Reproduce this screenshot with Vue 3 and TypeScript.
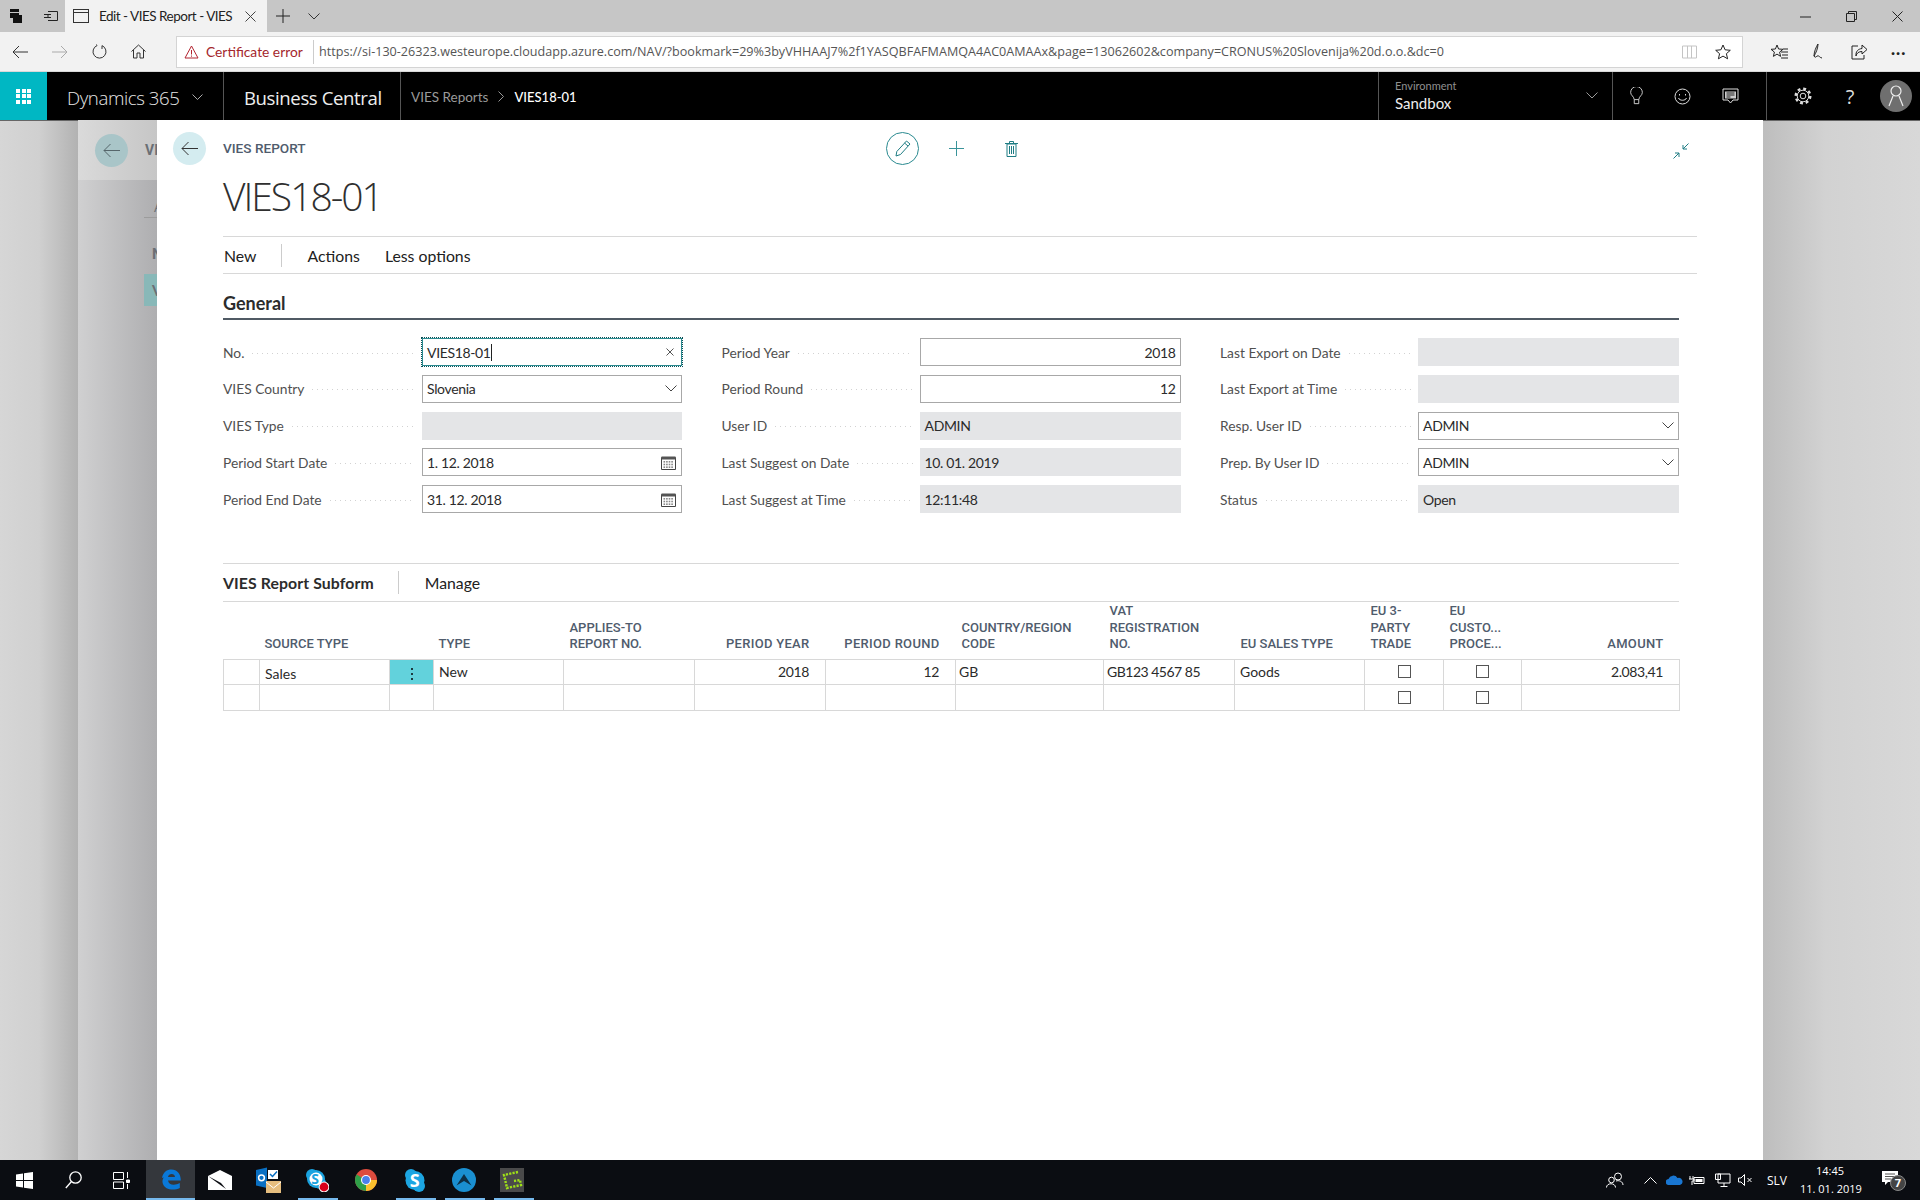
<script setup lang="ts">
interface Field {
  label: string
  value?: string
  kind: 'text' | 'focus' | 'select' | 'date' | 'number' | 'readonly'
}

const fieldColumns: Field[][] = [
  [
    { label: 'No.', value: 'VIES18-01', kind: 'focus' },
    { label: 'VIES Country', value: 'Slovenia', kind: 'select' },
    { label: 'VIES Type', kind: 'readonly' },
    { label: 'Period Start Date', value: '1. 12. 2018', kind: 'date' },
    { label: 'Period End Date', value: '31. 12. 2018', kind: 'date' },
  ],
  [
    { label: 'Period Year', value: '2018', kind: 'number' },
    { label: 'Period Round', value: '12', kind: 'number' },
    { label: 'User ID', value: 'ADMIN', kind: 'readonly' },
    { label: 'Last Suggest on Date', value: '10. 01. 2019', kind: 'readonly' },
    { label: 'Last Suggest at Time', value: '12:11:48', kind: 'readonly' },
  ],
  [
    { label: 'Last Export on Date', kind: 'readonly' },
    { label: 'Last Export at Time', kind: 'readonly' },
    { label: 'Resp. User ID', value: 'ADMIN', kind: 'select' },
    { label: 'Prep. By User ID', value: 'ADMIN', kind: 'select' },
    { label: 'Status', value: 'Open', kind: 'readonly' },
  ],
]

const colWidths = [36, 130, 44, 130, 131, 131, 130, 148, 131, 130, 79, 78, 158]

const calendarDays = [0, 1, 2, 3, 4, 5, 6, 7, 8, 9, 10, 11]
const activeApps = [6, 8, 9, 10]
</script>

<template>
  <div class="screen">
    <!-- browser tabs -->
    <div class="titlebar">
      <svg class="tb-icon" width="16" height="16" viewBox="0 0 16 16"><path d="M2 1h9v3H2z" fill="#111" /><path d="M2 5h9v2h3v8H5v-5H2z" fill="#111" /></svg>
      <svg class="tb-icon tb-second" width="16" height="16" viewBox="0 0 16 16" fill="none" stroke="#222"><path d="M5 3.5h9.5v9H5M1 6.5h7M1 9.5h7M5 6.5v3" /></svg>
      <div class="tab">
        <svg width="16" height="14" viewBox="0 0 16 14" fill="none" stroke="#333"><rect x=".5" y=".5" width="15" height="13" /><path d="M.5 3.5h15" /></svg>
        <span class="tab-title">Edit - VIES Report - VIES</span>
        <svg class="tab-close" width="11" height="11" viewBox="0 0 11 11" stroke="#444"><path d="M.5.5l10 10M10.5.5l-10 10" /></svg>
      </div>
      <svg class="tab-plus" width="14" height="14" viewBox="0 0 14 14" stroke="#222"><path d="M7 0v14M0 7h14" /></svg>
      <svg class="tab-more" width="12" height="7" viewBox="0 0 12 7" fill="none" stroke="#333"><path d="M.5.5L6 6 11.5.5" /></svg>
      <div class="win-controls">
        <svg width="11" height="11" viewBox="0 0 11 11" stroke="#222"><path d="M0 6h11" /></svg>
        <svg width="11" height="11" viewBox="0 0 11 11" fill="none" stroke="#222"><path d="M.5 2.5h8v8h-8zM2.5 2.5v-2h8v8h-2" /></svg>
        <svg width="11" height="11" viewBox="0 0 11 11" stroke="#222"><path d="M.5.5l10 10M10.5.5l-10 10" /></svg>
      </div>
    </div>

    <!-- address bar -->
    <div class="toolbar">
      <div class="nav-btns">
        <svg width="16" height="14" viewBox="0 0 16 14" fill="none" stroke="#333"><path d="M16 7H1M7 1L1 7l6 6" /></svg>
        <svg width="16" height="14" viewBox="0 0 16 14" fill="none" stroke="#aaa"><path d="M0 7h15M9 1l6 6-6 6" /></svg>
        <svg width="15" height="15" viewBox="0 0 15 15" fill="none" stroke="#333"><path d="M5 1.6A6.5 6.5 0 1 0 10 1.6M10 1.6V5M5 1.6L4.5 .5" /></svg>
        <svg width="15" height="15" viewBox="0 0 15 15" fill="none" stroke="#333"><path d="M.5 7.5L7.5 1l7 6.5M2.5 6v8h3.5V9h3v5h3.5V6" /></svg>
      </div>
      <div class="address">
        <svg width="15" height="14" viewBox="0 0 15 14" fill="none" stroke="#b32430"><path d="M7.5 1L14 13H1zM7.5 5v4.5M7.5 10.5v1.2" /></svg>
        <span class="cert">Certificate error</span>
        <span class="url">https://si-130-26323.westeurope.cloudapp.azure.com/NAV/?bookmark=29%3byVHHAAJ7%2f1YASQBFAFMAMQA4AC0AMAAx&amp;page=13062602&amp;company=CRONUS%20Slovenija%20d.o.o.&amp;dc=0</span>
        <svg class="read-icon" width="15" height="14" viewBox="0 0 15 14" fill="none" stroke="#c4c4c4"><path d="M.5 1h14v12H.5zM5.5 1v12M9.5 1v12" /></svg>
        <svg class="star-icon" width="16" height="16" viewBox="0 0 16 16" fill="none" stroke="#222"><path d="M8 1l2.1 4.8 5.2.5-3.9 3.4 1.2 5.1L8 12.1l-4.6 2.7 1.2-5.1L.7 6.3l5.2-.5z" /></svg>
      </div>
      <div class="tool-btns">
        <svg width="17" height="16" viewBox="0 0 17 16" fill="none" stroke="#222"><path d="M6 1L7.6 5l4.4.3-3.4 2.8 1 4.3L6 10.100 2.400 12.400l1-4.300L0 5.300 4.400 5zM10 8h7M11 11h6M10 14h7M12 5h5" /></svg>
        <svg width="17" height="17" viewBox="0 0 17 17" fill="none" stroke="#222"><path d="M7 1C5 4 3 9 3 13c2-3 4-8 4-12zM3 13c1 2 2 1 3 0 2-1 3 2 5 2" /></svg>
        <svg width="17" height="16" viewBox="0 0 17 16" fill="none" stroke="#222"><path d="M7 2H1v13h12v-4M11 1l5 4.500-5 4.500V7.500C8 7.500 5.500 9 5 12c-.5-4.500 2-7 6-7.500z" /></svg>
        <span class="more-dots">···</span>
      </div>
    </div>

    <!-- product header -->
    <header class="appbar">
      <div class="waffle">
        <span v-for="n in 9" :key="n"></span>
      </div>
      <div class="brand">
        <span>Dynamics 365</span>
        <svg width="11" height="6" viewBox="0 0 11 6" fill="none" stroke="#aaa"><path d="M.5.5l5 5 5-5" /></svg>
      </div>
      <div class="product">Business Central</div>
      <div class="crumbs">
        <span class="crumb-link">VIES Reports</span>
        <svg width="6" height="11" viewBox="0 0 6 11" fill="none" stroke="#999"><path d="M.5.5l5 5-5 5" /></svg>
        <span class="crumb-now">VIES18-01</span>
      </div>
      <div class="env">
        <div class="env-text">
          <div class="env-label">Environment</div>
          <div class="env-name">Sandbox</div>
        </div>
        <svg width="12" height="7" viewBox="0 0 12 7" fill="none" stroke="#999"><path d="M.5.5L6 6 11.500.5" /></svg>
      </div>
      <div class="bar-icons">
        <svg width="13" height="18" viewBox="0 0 14 20" fill="none" stroke="#ddd"><path d="M4.500 14C4 10 .5 9.500.5 6a6.500 6.500 0 0 1 13 0c0 3.500-3.500 4-4 8zM4.500 14v4.500h5V14" /></svg>
        <svg width="17" height="17" viewBox="0 0 17 17" fill="none" stroke="#ddd"><circle cx="8.500" cy="8.500" r="7.500" /><path d="M4.500 10c1 3 7 3 8 0M5.500 6v1.500M11.500 6v1.500" /></svg>
        <svg width="17" height="17" viewBox="0 0 17 17"><path d="M1 1h15v11h-5l-2.500 3L6 12H1z" fill="none" stroke="#ddd" /><path d="M3 3.500h11v7H3z" fill="#ccc" /><path d="M4.500 5h8M4.500 7h8M4.500 9h4" stroke="#222" /></svg>
      </div>
      <div class="bar-icons bar-icons-last">
        <svg class="gear" width="18" height="18" viewBox="0 0 18 18" fill="none" stroke="#ddd"><circle cx="9" cy="9" r="2.800" /><circle cx="9" cy="9" r="5.800" /><circle cx="9" cy="9" r="7.300" stroke-width="2.400" stroke-dasharray="2.900 2.830" /></svg>
        <span class="help">?</span>
        <div class="avatar">
          <svg width="16" height="22" viewBox="0 0 16 22" fill="none" stroke="#eee" stroke-width="1.200"><circle cx="8" cy="6" r="5" /><path d="M5 11L1 21M11 11l4 10" /></svg>
        </div>
      </div>
    </header>

    <main class="stage">
      <div class="gutter"></div>
      <div class="back-page">
        <div class="back-head">
          <div class="round-back dim">
            <svg width="17" height="15" viewBox="0 0 17 15" fill="none" stroke="#56666b"><path d="M17 7.500H1M7.500 1L1 7.500 7.500 14" /></svg>
          </div>
          <span class="back-cap">VI</span>
        </div>
        <div class="back-body">
          <div class="back-a">A</div>
          <div class="back-line"></div>
          <div class="back-n">N</div>
          <div class="back-row">V</div>
        </div>
      </div>

      <section class="dialog">
        <div class="top-row">
          <div class="round-back">
            <svg width="17" height="15" viewBox="0 0 17 15" fill="none" stroke="#333"><path d="M17 7.500H1M7.500 1L1 7.500 7.500 14" /></svg>
          </div>
          <span class="caption">VIES REPORT</span>
          <div class="page-actions">
            <div class="edit-btn">
              <svg width="16" height="17" viewBox="0 0 16 17" fill="none" stroke="#1f7d84"><path d="M11.500 1l3.500 3-9.500 10.500L1 16l.8-4.500zM9.500 3l3.500 3" /></svg>
            </div>
            <svg width="15" height="15" viewBox="0 0 15 15" stroke="#3a949a"><path d="M7.500 0v15M0 7.500h15" /></svg>
            <svg class="trash" width="13" height="16" viewBox="0 0 13 16" fill="none" stroke="#1f7d84"><path d="M2 3h9v12.500H2zM0 2.500h13M4.500 2.500V.5h4v2M4.500 5v8M6.500 5v8M8.500 5v8" /></svg>
          </div>
          <svg class="collapse" width="16" height="16" viewBox="0 0 16 16" fill="none" stroke="#1f7d84"><path d="M15.500.5L10 6M10 2v4h4M.5 15.500L6 10M2 10h4v4" /></svg>
        </div>

        <h1 class="page-title">VIES18-01</h1>

        <nav class="commands">
          <span>New</span>
          <i class="cmd-sep"></i>
          <span class="cmd-gap">Actions</span>
          <span>Less options</span>
        </nav>

        <div class="content">
          <h2 class="group-head">General</h2>
          <div class="form-grid">
            <div v-for="(column, c) in fieldColumns" :key="c" class="form-col">
              <div v-for="field in column" :key="field.label" class="field">
                <label class="field-label">
                  <span>{{ field.label }}</span>
                  <i class="leader"></i>
                </label>
                <div class="box" :class="field.kind">
                  <span class="box-value">{{ field.value }}</span>
                  <i v-if="field.kind === 'focus'" class="caret"></i>
                  <svg v-if="field.kind === 'focus'" class="box-x" width="8" height="8" viewBox="0 0 8 8" stroke="#555"><path d="M.5.5l7 7M7.500.5l-7 7" /></svg>
                  <svg v-if="field.kind === 'select'" class="box-chev" width="12" height="7" viewBox="0 0 12 7" fill="none" stroke="#444"><path d="M.5.5L6 6 11.500.5" /></svg>
                  <svg v-if="field.kind === 'date'" class="box-cal" width="15" height="15" viewBox="0 0 15 15">
                    <path d="M.5 2.500h14v12H.5z" fill="#fff" stroke="#444" />
                    <path d="M.5 1.500h14v3H.5z" fill="#555" />
                    <rect v-for="d in calendarDays" :key="d" :x="2.500 + (d % 4) * 2.600" :y="6 + Math.floor(d / 4) * 2.700" width="1.600" height="1.600" fill="#888" />
                  </svg>
                </div>
              </div>
            </div>
          </div>

          <div class="subform-head">
            <span class="subform-name">VIES Report Subform</span>
            <i class="cmd-sep"></i>
            <span class="cmd-gap">Manage</span>
          </div>

          <table class="lines">
            <colgroup>
              <col v-for="(w, i) in colWidths" :key="i" :style="{ width: w + 'px' }" />
            </colgroup>
            <thead>
              <tr>
                <th></th>
                <th class="tight">SOURCE TYPE</th>
                <th></th>
                <th class="tight">TYPE</th>
                <th>APPLIES-TO<br />REPORT NO.</th>
                <th class="num">PERIOD YEAR</th>
                <th class="num">PERIOD ROUND</th>
                <th>COUNTRY/REGION<br />CODE</th>
                <th>VAT<br />REGISTRATION<br />NO.</th>
                <th>EU SALES TYPE</th>
                <th>EU 3-<br />PARTY<br />TRADE</th>
                <th>EU<br />CUSTO...<br />PROCE...</th>
                <th class="num">AMOUNT</th>
              </tr>
            </thead>
            <tbody>
              <tr class="row-first">
                <td></td>
                <td class="sales">Sales</td>
                <td class="row-menu"><span class="vdots"><i></i><i></i><i></i></span></td>
                <td>New</td>
                <td></td>
                <td class="num">2018</td>
                <td class="num">12</td>
                <td class="pull">GB</td>
                <td class="pull digits">GB123 4567 85</td>
                <td>Goods</td>
                <td class="check"><i class="tick"></i></td>
                <td class="check"><i class="tick"></i></td>
                <td class="num">2.083,41</td>
              </tr>
              <tr class="row-empty">
                <td></td><td></td><td></td><td></td><td></td><td></td><td></td><td></td><td></td><td></td>
                <td class="check"><i class="tick"></i></td>
                <td class="check"><i class="tick"></i></td>
                <td></td>
              </tr>
            </tbody>
          </table>
        </div>
      </section>
      <div class="gutter-right"></div>
    </main>

    <!-- windows taskbar -->
    <footer class="taskbar">
      <div class="apps">
        <div class="app">
          <svg width="17" height="17" viewBox="0 0 17 17" fill="#fff"><path d="M0 2.500L7 1.500v6.500H0zM8 1.300L17 0v8H8zM0 9h7v6.500l-7-1zM8 9h9v8l-9-1.300z" /></svg>
        </div>
        <div class="app">
          <svg width="17" height="18" viewBox="0 0 17 18" fill="none" stroke="#fff" stroke-width="1.300"><circle cx="10.500" cy="6.500" r="5.700" /><path d="M6.500 10.500L.8 17" /></svg>
        </div>
        <div class="app">
          <svg width="18" height="17" viewBox="0 0 18 17" fill="none" stroke="#fff"><path d="M.5.500h10v7H.5zM.5 10h10v6.500H.5z" /><path d="M14.500 0v6M14.500 12v5" /><path d="M13.500 8h3v2.500h-3z" fill="#fff" /></svg>
        </div>
        <div class="app app-active">
          <svg width="20" height="21" viewBox="0 0 20 21"><path d="M1 9C2 3 6 .5 10.500.5 16 .5 19.800 4.500 19.800 11.500H7c.5 4.500 6.500 5.500 11.800 2.500v5c-6 3-15 2-17-4.500C.5 10.500 3.500 6.500 6 5 4 6.500 3.500 8 3.500 8zM7 8h7c0-4-6.500-4-7 0z" fill="#0a78d7" /></svg>
        </div>
        <div class="app">
          <svg width="24" height="20" viewBox="0 0 24 20"><path d="M0 6l12-6 12 6v14H0z" fill="#fff" /><path d="M0 6l13 7 5 6-7-5z" fill="#0b0d12" /></svg>
        </div>
        <div class="app">
          <svg width="26" height="26" viewBox="0 0 26 26">
            <path d="M1 3l11-2.500V21L1 18.500z" fill="#0a6fc2" />
            <circle cx="6.500" cy="10.800" r="2.900" fill="none" stroke="#fff" stroke-width="1.500" />
            <path d="M13 3h10v9H13z" fill="#fff" />
            <path d="M15 7l2.500 2.500L22 4.500" fill="none" stroke="#0a6fc2" stroke-width="1.500" />
            <path d="M11 14h15v12H11z" fill="#e6bd7e" />
            <path d="M11 15l7.500 6L26 15" fill="none" stroke="#fff" />
          </svg>
        </div>
        <div class="app">
          <svg width="24" height="24" viewBox="0 0 24 24">
            <circle cx="7" cy="7" r="6" fill="#1aa3e0" />
            <circle cx="15" cy="15" r="6" fill="#1aa3e0" />
            <circle cx="11" cy="11" r="9" fill="#1aa3e0" />
            <circle cx="11" cy="11" r="6.500" fill="#fff" />
            <circle cx="19" cy="19" r="5.400" fill="#fff" />
            <circle cx="19" cy="19" r="4.400" fill="#d9001b" />
          </svg>
          <span class="skype-s skype-s-small">S</span>
        </div>
        <div class="app">
          <svg width="22" height="22" viewBox="0 0 22 22">
            <circle cx="11" cy="11" r="11" fill="#dd4b3e" />
            <path d="M11 11L1.500 5.500A11 11 0 0 0 11 22z" fill="#2e9f48" />
            <path d="M11 11h11a11 11 0 0 1-11 11z" fill="#fbc02d" />
            <circle cx="11" cy="11" r="5" fill="#fff" />
            <circle cx="11" cy="11" r="3.900" fill="#4a80ec" />
          </svg>
        </div>
        <div class="app">
          <svg width="20" height="23" viewBox="0 0 20 23">
            <circle cx="6" cy="6" r="6" fill="#1ca5e2" />
            <circle cx="14" cy="17" r="6" fill="#1ca5e2" />
            <circle cx="10" cy="11.500" r="9.500" fill="#1ca5e2" />
          </svg>
          <span class="skype-s">S</span>
        </div>
        <div class="app">
          <svg width="24" height="24" viewBox="0 0 24 24">
            <circle cx="12" cy="12" r="12" fill="#1a8fd1" />
            <path d="M4.500 17.500L12 6l7.500 11.500L12 13z" fill="#0d2f46" />
          </svg>
        </div>
        <div class="app">
          <svg width="24" height="24" viewBox="0 0 24 24">
            <rect width="24" height="24" fill="#4a4a4a" />
            <path d="M18 4L4 7l3 13 14-3-1-5-6 1" fill="none" stroke="#9ee018" stroke-width="2.400" stroke-dasharray="2.200 1.200" />
          </svg>
        </div>
        <i v-for="a in activeApps" :key="a" class="app-mark" :style="{ left: a * 49 + 4 + 'px' }"></i>
      </div>

      <div class="tray">
        <svg class="tray-people" width="18" height="16" viewBox="0 0 18 16" fill="none" stroke="#fff"><circle cx="12" cy="4.500" r="3.500" /><circle cx="5.500" cy="8" r="2.800" /><path d="M.5 15.500c0-5 9-5 9 0M10 9c3-1 7 .5 7 4" /></svg>
        <svg class="tray-chev" width="13" height="7" viewBox="0 0 13 7" fill="none" stroke="#fff"><path d="M.5 6.500l6-6 6 6" /></svg>
        <svg class="tray-cloud" width="17" height="10" viewBox="0 0 17 10"><path d="M3 10a3 3 0 0 1-.5-6A5 5 0 0 1 11.500 3 3.500 3.500 0 0 1 14 10z" fill="#1976d2" /></svg>
        <svg class="tray-batt" width="16" height="11" viewBox="0 0 16 11"><path d="M5 2.500h10v6H5z" fill="none" stroke="#fff" /><path d="M6.500 4h7v3h-7z" fill="#fff" /><path d="M1 1v3M4 1v3M0 4h5v2H3v4" fill="none" stroke="#fff" /></svg>
        <svg class="tray-net" width="16" height="14" viewBox="0 0 16 14" fill="none" stroke="#fff"><path d="M3 1h12v9H3zM9 10v3.500M5.500 13.500h7M.5 1h5v5.500h-5z" /></svg>
        <svg class="tray-vol" width="15" height="12" viewBox="0 0 15 12" fill="none" stroke="#fff"><path d="M.5 4h2.500L6.500.5v11L3 8H.5zM9.500 4l4 4M13.500 4l-4 4" /></svg>
        <span class="tray-lang">SLV</span>
        <div class="tray-clock">
          <div>14:45</div>
          <div>11. 01. 2019</div>
        </div>
        <div class="tray-note">
          <svg width="17" height="16" viewBox="0 0 17 16"><path d="M0 0h16v11H6l-3 3v-3H0z" fill="#fff" /><path d="M3 3h10M3 5.500h10M3 8h6" stroke="#555" /></svg>
          <span class="note-count">7</span>
        </div>
      </div>
    </footer>
  </div>
</template>

<style>
html,
body {
  margin: 0;
  background: #fff;
}
</style>

<style scoped>
.screen {
  width: 1920px;
  height: 1200px;
  display: flex;
  flex-direction: column;
  overflow: hidden;
  font-family: Lato, "Open Sans", sans-serif;
  color: #333;
}

/* browser chrome */
.titlebar {
  height: 32px;
  flex: none;
  display: flex;
  align-items: center;
  background: #c6c6c6;
  padding-left: 8px;
}
.tb-second {
  margin-left: 19px;
  margin-right: 6px;
}
.tab {
  width: 202px;
  height: 32px;
  box-sizing: border-box;
  display: flex;
  align-items: center;
  gap: 10px;
  padding-left: 8px;
  background: #f2f2f2;
  font-size: 13.5px;
  letter-spacing: -0.5px;
  color: #222;
  flex: none;
}
.tab svg {
  flex: none;
}
.tab-title {
  width: 135px;
  white-space: nowrap;
}
.tab-close {
  margin-left: 1px;
}
.tab-plus {
  margin-left: 9px;
}
.tab-more {
  margin-left: 18px;
}
.win-controls {
  margin-left: auto;
  width: 120px;
  display: flex;
  align-items: center;
  gap: 35px;
}
.toolbar {
  height: 40px;
  flex: none;
  display: flex;
  align-items: center;
  background: #f2f2f2;
  border-bottom: 1px solid #d8d8d8;
  box-sizing: border-box;
}
.nav-btns {
  width: 176px;
  flex: none;
  display: flex;
  align-items: center;
  gap: 24px;
  padding-left: 12px;
  box-sizing: border-box;
}
.address {
  width: 1567px;
  height: 32px;
  flex: none;
  box-sizing: border-box;
  background: #fff;
  border: 1px solid #d4d4d4;
  display: flex;
  align-items: center;
  padding-left: 7px;
  font-size: 13.8px;
  white-space: nowrap;
}
.cert {
  color: #a4262c;
  margin-left: 7px;
  width: 107px;
  border-right: 1px solid #ccc;
  line-height: 24px;
  flex: none;
}
.url {
  margin-left: 5px;
  color: #555;
  flex: 1;
  font-family: "Open Sans", sans-serif;
  font-size: 12.6px;
  overflow: hidden;
}
.read-icon {
  margin-left: 20px;
  flex: none;
}
.star-icon {
  margin: 0 11px 0 18px;
  flex: none;
}
.tool-btns {
  flex: 1;
  display: flex;
  align-items: center;
  gap: 23px;
  padding-left: 28px;
}
.more-dots {
  font-size: 15px;
  color: #222;
  font-weight: 700;
  letter-spacing: 1px;
}

/* product bar */
.appbar {
  height: 48px;
  flex: none;
  display: flex;
  align-items: stretch;
  background: #000;
  color: #fff;
}
.waffle {
  width: 47px;
  flex: none;
  background: #00b7c3;
  display: grid;
  grid-template-columns: repeat(3, 4px);
  grid-auto-rows: 4px;
  gap: 1.5px;
  align-content: center;
  justify-content: center;
}
.waffle span {
  background: #fff;
}
.brand {
  width: 177px;
  flex: none;
  box-sizing: border-box;
  padding: 2px 0 0 20px;
  display: flex;
  align-items: center;
  gap: 13px;
  font-size: 18.6px;
  font-weight: 300;
  color: #e6e6e6;
  font-family: "Open Sans", sans-serif;
  letter-spacing: -0.4px;
  border-right: 1px solid #555;
}
.product {
  width: 177px;
  flex: none;
  box-sizing: border-box;
  padding: 2px 0 0 20px;
  display: flex;
  align-items: center;
  font-size: 18.6px;
  color: #eee;
  font-family: "Open Sans", sans-serif;
  letter-spacing: -0.4px;
  border-right: 1px solid #555;
}
.crumbs {
  flex: 1;
  display: flex;
  align-items: center;
  padding: 1px 0 0 10px;
  gap: 10px;
  font-size: 13.5px;
}
.crumb-link {
  color: #9a9a9a;
}
.crumb-now {
  color: #fff;
  font-weight: 500;
  font-size: 13px;
}
.env {
  width: 234px;
  flex: none;
  box-sizing: border-box;
  padding: 0 14px 2px 16px;
  border-left: 1px solid #555;
  display: flex;
  align-items: center;
  justify-content: space-between;
}
.env-label {
  font-size: 11px;
  color: #8f8f8f;
  line-height: 16px;
}
.env-name {
  font-size: 15px;
  color: #eee;
  line-height: 18px;
}
.bar-icons {
  width: 154px;
  flex: none;
  box-sizing: border-box;
  border-left: 1px solid #555;
  display: flex;
  align-items: center;
  gap: 31px;
  padding-left: 17px;
}
.bar-icons-last {
  padding: 0 8px 0 27px;
  gap: 0;
}
.help {
  width: 12px;
  margin-left: 32px;
  font-size: 20px;
  color: #ddd;
  text-align: center;
  font-family: "Open Sans", sans-serif;
}
.avatar {
  width: 32px;
  height: 32px;
  flex: none;
  margin-left: auto;
  border-radius: 50%;
  background: #6f6f6f;
  display: flex;
  align-items: center;
  justify-content: center;
}

/* stacked pages */
.stage {
  flex: 1;
  min-height: 0;
  display: flex;
}
.gutter {
  width: 78px;
  flex: none;
  background: linear-gradient(90deg, #d6d6d6, #d0d0d0 50%, #b2b2b2);
  border-top: 1px solid #666;
  box-sizing: border-box;
}
.gutter-right {
  flex: 1;
  background: linear-gradient(90deg, #bdbdbd, #d2d2d2 40%, #d8d8d8);
  border-top: 1px solid #666;
  box-sizing: border-box;
}
.back-page {
  width: 79px;
  flex: none;
  display: flex;
  flex-direction: column;
  overflow: hidden;
}
.back-head {
  height: 60px;
  flex: none;
  display: flex;
  align-items: center;
  gap: 17px;
  box-sizing: border-box;
  padding-left: 17px;
  background: linear-gradient(90deg, #dadada, #c6c6c6);
}
.back-cap {
  font-size: 14px;
  font-weight: 700;
  color: #6b6f75;
  font-family: Roboto, sans-serif;
}
.back-body {
  flex: 1;
  background: linear-gradient(90deg, #d0d0d1, #aeaeb0);
  padding: 17px 0 0 66px;
  box-sizing: border-box;
  color: #6b6f75;
  font-size: 15px;
  font-weight: 700;
}
.back-a {
  height: 20px;
  line-height: 20px;
  padding-left: 10px;
  font-weight: 400;
  font-size: 13px;
}
.back-line {
  height: 1px;
  background: #9c9c9c;
}
.back-n {
  margin-top: 27px;
  padding-left: 8px;
  font-family: Roboto, sans-serif;
}
.back-row {
  margin-top: 11px;
  height: 32px;
  line-height: 32px;
  padding-left: 8px;
  background: #88b8b8;
}
.round-back {
  width: 33px;
  height: 33px;
  flex: none;
  border-radius: 50%;
  background: #d4ecf0;
  display: flex;
  align-items: center;
  justify-content: center;
}
.round-back.dim {
  background: #a9c5c8;
}
.dialog {
  width: 1606px;
  flex: none;
  box-sizing: border-box;
  background: #fff;
  padding: 12px 66px 0;
}
.top-row {
  height: 33px;
  display: flex;
  align-items: center;
}
.top-row .round-back {
  margin-left: -50px;
  margin-right: 17px;
}
.caption {
  width: 663px;
  flex: none;
  padding-bottom: 2px;
  font-family: Roboto, sans-serif;
  font-size: 13.6px;
  font-weight: 500;
  color: #505c6d;
}
.page-actions {
  display: flex;
  align-items: center;
  gap: 30px;
}
.trash {
  margin-left: 11px;
}
.edit-btn {
  width: 33px;
  height: 33px;
  box-sizing: border-box;
  border: 1px solid #2a8a90;
  border-radius: 50%;
  display: flex;
  align-items: center;
  justify-content: center;
}
.collapse {
  margin-left: auto;
  margin-right: 8px;
  margin-top: 5px;
}
.page-title {
  margin: 6px 0 15px;
  font-size: 39px;
  line-height: 50px;
  font-weight: 300;
  color: #2f2f2f;
  font-family: "Open Sans", sans-serif;
  letter-spacing: -2px;
}
.commands {
  height: 38px;
  box-sizing: border-box;
  border-top: 1px solid #d8d8d8;
  border-bottom: 1px solid #d8d8d8;
  display: flex;
  align-items: center;
  font-size: 15.8px;
  color: #212121;
  padding-left: 1px;
}
.commands span:last-child {
  margin-left: 25px;
}
.cmd-sep {
  width: 1px;
  height: 23px;
  background: #ccc;
  margin-left: 24px;
}
.cmd-gap {
  margin-left: 26px;
}
.content {
  width: 1456px;
}
.group-head {
  margin: 0;
  height: 44px;
  box-sizing: border-box;
  padding-top: 16px;
  line-height: 26px;
  font-size: 18px;
  font-weight: 700;
  color: #2c2c2c;
}
.form-grid {
  border-top: 2px solid #505a64;
  padding-top: 18px;
  display: grid;
  grid-template-columns: repeat(3, 459px);
  column-gap: 39.5px;
}
.form-col {
  display: flex;
  flex-direction: column;
  gap: 8.800px;
}
.field {
  display: flex;
  height: 28px;
  align-items: center;
}
.field-label {
  width: 199px;
  flex: none;
  display: flex;
  align-items: center;
  font-size: 13.8px;
  color: #505050;
  white-space: nowrap;
}
.form-col:not(:first-child) .field-label {
  width: 198px;
}
.form-col:not(:first-child) .box {
  width: 261px;
}
.leader {
  flex: 1;
  height: 1px;
  margin: 2px 7px 0 8px;
  background-image: repeating-linear-gradient(90deg, #d2d2d2 0 1px, transparent 1px 5px);
}
.box {
  width: 260px;
  height: 28px;
  flex: none;
  box-sizing: border-box;
  display: flex;
  align-items: center;
  padding: 0 4px;
  font-size: 14px;
  letter-spacing: -0.35px;
  color: #2b2b2b;
  border: 1px solid #a8a8a8;
  background: #fff;
}
.box.readonly {
  background: #e4e5e7;
  border-color: #e4e5e7;
}
.box.number {
  justify-content: flex-end;
}
.box.focus {
  border: 1px solid #2a8a90;
  outline: 1px dotted #0c4f55;
}
.caret {
  width: 1px;
  height: 17px;
  background: #222;
}
.box-x {
  margin-left: auto;
  margin-right: 3px;
}
.box-chev {
  margin-left: auto;
  margin-right: 0;
}
.box-cal {
  margin-left: auto;
  margin-right: 1px;
}
.subform-head {
  margin-top: 50px;
  height: 39px;
  box-sizing: border-box;
  border-top: 1px solid #d8d8d8;
  border-bottom: 1px solid #d8d8d8;
  display: flex;
  align-items: center;
  font-size: 15.8px;
  color: #212121;
}
.subform-name {
  font-weight: 700;
  color: #2c2c2c;
  letter-spacing: 0.1px;
}
.subform-head .cmd-sep {
  margin-left: 24px;
}
.lines {
  table-layout: fixed;
  width: 1456px;
  border-collapse: collapse;
  font-size: 14px;
}
.lines th {
  height: 57px;
  padding: 0 5px 6px 6px;
  box-sizing: border-box;
  vertical-align: bottom;
  text-align: left;
  font-family: Roboto, sans-serif;
  font-size: 13px;
  line-height: 16.600px;
  font-weight: 500;
  color: #505c6d;
  white-space: nowrap;
}
.lines th.tight {
  padding-left: 5px;
}
.lines th.num {
  letter-spacing: 0.3px;
}
.lines td {
  height: 25px;
  padding: 0 5px;
  box-sizing: border-box;
  border: 1px solid #d8d8d8;
  color: #2b2b2b;
}
.row-empty td {
  height: 26px;
}
.lines .num {
  text-align: right;
  padding-right: 16px;
}
.lines td.num {
  letter-spacing: -0.4px;
}
.lines td.pull {
  padding-left: 3px;
}
.lines td.digits {
  letter-spacing: -0.5px;
}
.lines td.sales {
  padding-top: 3px;
}
.lines td.row-menu {
  background: #62d2dc;
  text-align: center;
  padding: 0;
}
.vdots {
  display: inline-flex;
  flex-direction: column;
  gap: 3px;
  vertical-align: middle;
}
.vdots i {
  width: 2px;
  height: 2px;
  background: #1c3a40;
}
.lines td.check {
  text-align: center;
  padding: 0;
}
.tick {
  display: inline-block;
  width: 13px;
  height: 13px;
  box-sizing: border-box;
  border: 1px solid #555;
  vertical-align: -1px;
}

/* windows taskbar */
.taskbar {
  height: 40px;
  flex: none;
  background: #0b0d12;
  display: flex;
  justify-content: space-between;
  color: #fff;
}
.apps {
  display: flex;
  position: relative;
}
.app {
  width: 48.800px;
  height: 40px;
  display: flex;
  align-items: center;
  justify-content: center;
  position: relative;
}
.app-active {
  background: #34373c;
  border-bottom: 2px solid #76b9ed;
  box-sizing: border-box;
}
.app-mark {
  position: absolute;
  bottom: 0;
  width: 40px;
  height: 2px;
  background: #76b9ed;
}
.skype-s {
  position: absolute;
  left: 0;
  right: 0;
  top: 7px;
  text-align: center;
  font: 700 18px/26px "Open Sans", sans-serif;
  color: #fff;
}
.skype-s-small {
  font-size: 14px;
  color: #1aa3e0;
  right: 4px;
  top: 6px;
}
.tray {
  width: 320px;
  display: flex;
  align-items: center;
  font-family: "Open Sans", sans-serif;
}
.tray-people {
  margin-left: 6px;
}
.tray-chev {
  margin-left: 20px;
}
.tray-cloud {
  margin-left: 9px;
}
.tray-batt {
  margin-left: 6px;
}
.tray-net {
  margin-left: 10px;
}
.tray-vol {
  margin-left: 7px;
}
.tray-lang {
  margin-left: 14px;
  font-size: 12px;
}
.tray-clock {
  margin-left: 13px;
  width: 60px;
  font-size: 11px;
  line-height: 18px;
  text-align: center;
  white-space: nowrap;
}
.tray-note {
  margin-left: 22px;
  position: relative;
  height: 20px;
}
.note-count {
  position: absolute;
  left: 8px;
  top: 5px;
  width: 16px;
  height: 16px;
  border-radius: 50%;
  background: #444;
  border: 1px solid #888;
  box-sizing: border-box;
  text-align: center;
  font-size: 11px;
  line-height: 14px;
  font-weight: 700;
}
</style>
